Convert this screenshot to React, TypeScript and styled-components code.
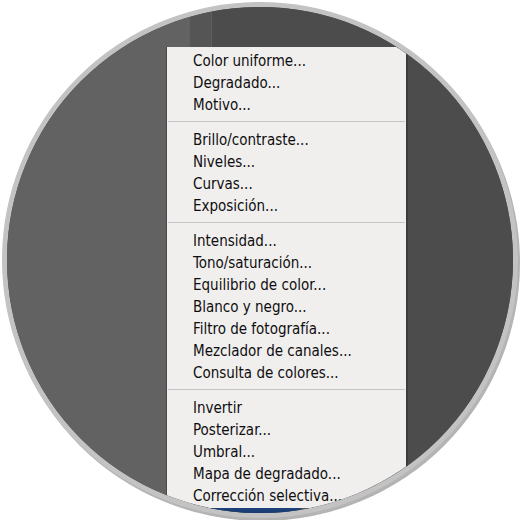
import React from "react";
import styled, {createGlobalStyle} from "styled-components";

const GlobalStyle = createGlobalStyle`
  html, body {
    margin: 0;
    padding: 0;
    background: #ffffff;
  }
`

const Stage = styled.div`
  width: 520px;
  height: 520px;
  padding: 2px;
  box-sizing: border-box;
`

const Lens = styled.div`
  position: relative;
  width: 516px;
  height: 516px;
  box-sizing: border-box;
  border-radius: 50%;
  border: 5px solid #c3c3c3;
  box-shadow: 2px 3px 0 0 #b4b4b4;
  overflow: hidden;
  background: #4c4c4c;
`

const Workspace = styled.div`
  display: grid;
  grid-template-columns: 183px 21px 1px 1fr;
  grid-template-rows: 1fr 16px;
  height: 100%;
`

const LeftPanel = styled.div`
  background: #626262;
`

const Strip = styled.div`
  background: #555555;
`

const Divider = styled.div`
  background: #5e5e5e;
`

const Canvas = styled.div`
  background: #4c4c4c;
`

const Taskbar = styled.div`
  grid-column: 1 / -1;
  display: flex;
  padding-left: 186px;
  background: #575757;
`

const TaskButton = styled.div`
  width: 108px;
  background: linear-gradient(#2a5596, #183a70);
`

const Menu = styled.div`
  position: absolute;
  left: 159px;
  top: 40px;
  width: 240px;
  padding: 3px 0 1px;
  box-sizing: border-box;
  background: #f1eeee;
  border-left: 1px solid #4a4a4a;
  box-shadow: 2px 0 0 #3c3c3c;
  font-family: "DejaVu Sans Condensed", "DejaVu Sans", sans-serif;
  font-stretch: condensed;
  font-size: 15px;
  color: #0e0e0e;
`

const Item = styled.div`
  height: 22px;
  line-height: 22px;
  padding-left: 26px;
  white-space: nowrap;
`

const Separator = styled.div`
  height: 1px;
  margin: 5px 1px 7px 1px;
  background: #c4c4c4;
`

const groups: string[][] = [
    ["Color uniforme...", "Degradado...", "Motivo..."],
    ["Brillo/contraste...", "Niveles...", "Curvas...", "Exposición..."],
    ["Intensidad...", "Tono/saturación...", "Equilibrio de color...", "Blanco y negro...", "Filtro de fotografía...", "Mezclador de canales...", "Consulta de colores..."],
    ["Invertir", "Posterizar...", "Umbral...", "Mapa de degradado...", "Corrección selectiva..."],
];

export default function App() {
    return (
        <>
            <GlobalStyle/>
            <Stage>
                <Lens>
                    <Workspace>
                        <LeftPanel/>
                        <Strip/>
                        <Divider/>
                        <Canvas/>
                        <Taskbar>
                            <TaskButton/>
                        </Taskbar>
                    </Workspace>
                    <Menu>
                        {groups.map((g, i) => (
                            <React.Fragment key={i}>
                                {i > 0 && <Separator/>}
                                {g.map((label) => (
                                    <Item key={label}>{label}</Item>
                                ))}
                            </React.Fragment>
                        ))}
                    </Menu>
                </Lens>
            </Stage>
        </>
    );
}
